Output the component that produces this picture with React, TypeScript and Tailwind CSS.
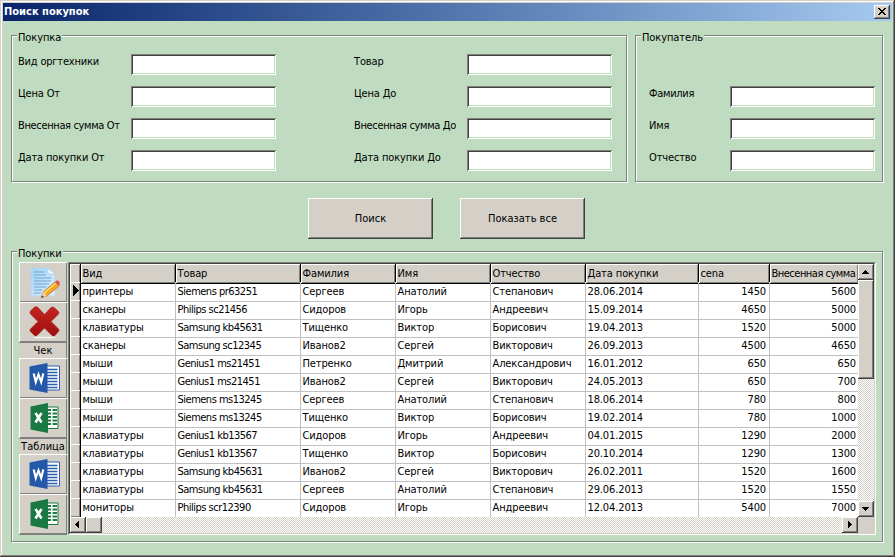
import React from "react";

const raised =
  "bg-[#d4d0c8] shadow-[inset_-1px_-1px_0_#404040,inset_1px_1px_0_#fff,inset_-2px_-2px_0_#808080]";
const dither =
  "bg-[repeating-conic-gradient(#fff_0_25%,#d4d0c8_0_50%)] bg-[length:2px_2px]";

function GroupBox({ title, className, children }: { title: string; className: string; children: React.ReactNode }) {
  return (
    <fieldset
      className={`relative border border-[#808080] shadow-[1px_1px_0_#fff,inset_1px_1px_0_#fff] ${className}`}
    >
      <span className="absolute left-[5px] top-[-7px] h-[14px] whitespace-nowrap bg-[#c0dcc0] px-px leading-[18px] tracking-[-0.1px]">
        {title}
      </span>
      {children}
    </fieldset>
  );
}

function Field({ label, labelWidth, tracking = "tracking-[-0.15px]" }: { label: string; labelWidth: string; tracking?: string }) {
  return (
    <label className="flex h-[21px]">
      <span className={`${labelWidth} ${tracking} whitespace-nowrap leading-[15px]`}>{label}</span>
      <input className="h-[21px] w-[145px] bg-white shadow-[inset_1px_1px_0_#808080,inset_-1px_-1px_0_#fff,inset_2px_2px_0_#404040,inset_-2px_-2px_0_#c0dcc0] outline-none" />
    </label>
  );
}

function EditIcon() {
  return (
    <svg width="30" height="34" viewBox="0 0 30 34">
      <defs>
        <linearGradient id="sheet" x1="0" y1="0" x2="1" y2="1">
          <stop offset="0" stopColor="#a4d2f6" />
          <stop offset="1" stopColor="#dcf0fd" />
        </linearGradient>
      </defs>
      <path d="M1 3H18L25 9V31H1Z" fill="url(#sheet)" stroke="#b4d5ee" strokeWidth=".6" />
      <path d="M18 3V9H25Z" fill="#eef8ff" stroke="#9cc4e4" strokeWidth=".6" />
      <path d="M4 7H15M4 10H16M4 13H21M4 16H21M4 19H19M4 22H16M4 25H12M4 28H11" stroke="#6fa4d0" strokeWidth="1" />
      <path d="M11.500 32.500L13 27L25 17L29 21L17 31Z" fill="#f6a823" stroke="#a86408" strokeWidth=".6" />
      <path d="M14 28L26 18" stroke="#ffdc70" strokeWidth="1.500" />
      <path d="M25 17L26.500 15.500Q28 15 29.200 16.500Q30 18 29.700 20L29 21Z" fill="#d55a4d" />
      <path d="M11.500 32.500L13 27L17 31Z" fill="#f4d5a4" />
      <path d="M11.300 32.700L12 30.200L13.800 32Z" fill="#333" />
    </svg>
  );
}

function DeleteIcon() {
  return (
    <svg width="31" height="33" viewBox="0 0 31 33">
      <defs>
        <linearGradient id="cross" x1="0" y1="0" x2="0" y2="1">
          <stop offset="0" stopColor="#c42420" />
          <stop offset="1" stopColor="#9e1010" />
        </linearGradient>
      </defs>
      <path d="M5 31.500H26" stroke="#f4f2ef" strokeWidth="1.500" />
      <path
        d="M7 1Q8 .5 9 1.500L15.500 8.500L22 1.500Q23.500 .5 25 1.500L29 5Q30.500 6.500 29.500 8L22 15.500L29.500 23Q30.500 24.500 29.500 25.500L26 29.500Q24.500 30.500 23 29.500L15.500 22L8 29.500Q6.500 30.500 5.500 29.500L1.500 25.500Q.5 24.500 1.500 23L9 15.500L1.500 8Q.5 6.500 1.500 5L5 1.500Q6 .5 7 1Z"
        fill="url(#cross)"
        stroke="#a31513"
        strokeWidth=".6"
      />
    </svg>
  );
}

function OfficeIcon({ kind }: { kind: "word" | "excel" }) {
  const word = kind === "word";
  return word ? (
    <svg width="32" height="32" viewBox="0 0 32 32">
      <path d="M17 4H30.500V28H17Z" fill="#fff" stroke="#2b5fb0" strokeWidth="1" />
      <path d="M18 7.500H28.500M18 10.500H28.500M18 13.500H28.500M18 16.500H28.500M18 19.500H28.500M18 22.500H28.500M18 25.500H28.500" stroke="#2b5fb0" strokeWidth="1.300" />
      <path d="M.5 4.500L18.500 1V31L.5 27.500Z" fill="#2458a8" />
      <path d="M4.700 11.500L6.800 20L9.500 12.500L12.200 20L14.300 11.500" fill="none" stroke="#fff" strokeWidth="2.200" />
    </svg>
  ) : (
    <svg width="32" height="32" viewBox="0 0 32 32">
      <path d="M18 5H29V26.500H18Z" fill="#fff" stroke="#1d7b45" strokeWidth="1" />
      <path d="M19 8H22M23.500 8H28M19 11.500H22M23.500 11.500H28M19 15H22M23.500 15H28M19 18.500H22M23.500 18.500H28M19 22H22M23.500 22H28" stroke="#1d7b45" strokeWidth="2.100" />
      <path d="M1.500 4.500L19 1V31L1.500 27.500Z" fill="#1a7842" />
      <path d="M6.500 11L12.500 20.500M12.500 11L6.500 20.500" fill="none" stroke="#fff" strokeWidth="2.600" />
    </svg>
  );
}

function ToolButton({ children, label }: { children: React.ReactNode; label: string }) {
  return (
    <button
      aria-label={label}
      className="flex h-[40px] w-[48px] items-center justify-center bg-[#d4d0c8] pl-[3px] shadow-[inset_1px_1px_0_#fff,inset_-1px_-1px_0_#808080]"
    >
      {children}
    </button>
  );
}

function ToolLabel({ children }: { children: React.ReactNode }) {
  return (
    <div className="h-[16px] w-[48px] bg-[#d4d0c8] text-center leading-[17px] shadow-[inset_0_1px_0_#808080,inset_-1px_0_0_#808080]">
      {children}
    </div>
  );
}

function ScrollButton({ d, className = "" }: { d: string; className?: string }) {
  return (
    <button className={`h-[16px] w-[16px] shrink-0 ${raised} ${className}`}>
      <svg width="16" height="16" viewBox="0 0 16 16" shapeRendering="crispEdges">
        <path d={d} fill="#000" />
      </svg>
    </button>
  );
}

const columns = "grid grid-cols-[11px_95px_125px_95px_95px_95px_113px_71px_88px]";
const headers = ["Вид", "Товар", "Фамилия", "Имя", "Отчество", "Дата покупки", "cena", "Внесенная сумма"];
const rows = [
  ["принтеры", "Siemens pr63251", "Сергеев", "Анатолий", "Степанович", "28.06.2014", "1450", "5600"],
  ["сканеры", "Philips sc21456", "Сидоров", "Игорь", "Андреевич", "15.09.2014", "4650", "5000"],
  ["клавиатуры", "Samsung kb45631", "Тищенко", "Виктор", "Борисович", "19.04.2013", "1520", "5000"],
  ["сканеры", "Samsung sc12345", "Иванов2", "Сергей", "Викторович", "26.09.2013", "4500", "4650"],
  ["мыши", "Genius1 ms21451", "Петренко", "Дмитрий", "Александрович", "16.01.2012", "650", "650"],
  ["мыши", "Genius1 ms21451", "Иванов2", "Сергей", "Викторович", "24.05.2013", "650", "700"],
  ["мыши", "Siemens ms13245", "Сергеев", "Анатолий", "Степанович", "18.06.2014", "780", "800"],
  ["мыши", "Siemens ms13245", "Тищенко", "Виктор", "Борисович", "19.02.2014", "780", "1000"],
  ["клавиатуры", "Genius1 kb13567", "Сидоров", "Игорь", "Андреевич", "04.01.2015", "1290", "2000"],
  ["клавиатуры", "Genius1 kb13567", "Тищенко", "Виктор", "Борисович", "20.10.2014", "1290", "1300"],
  ["клавиатуры", "Samsung kb45631", "Иванов2", "Сергей", "Викторович", "26.02.2011", "1520", "1600"],
  ["клавиатуры", "Samsung kb45631", "Сергеев", "Анатолий", "Степанович", "29.06.2013", "1520", "1550"],
  ["мониторы", "Philips scr12390", "Сидоров", "Игорь", "Андреевич", "12.04.2013", "5400", "7000"],
];

const fixedCell = "border-b border-r border-black bg-[#d4d0c8] shadow-[inset_1px_1px_0_#fff,inset_-1px_-1px_0_#808080]";

function DataGrid() {
  return (
    <div className="ml-px h-[273px] w-[808px] border border-b-white border-l-[#808080] border-r-white border-t-[#808080]">
      <div className="flex h-[271px] flex-col border border-b-[#d4d0c8] border-l-[#404040] border-r-[#d4d0c8] border-t-[#404040] bg-white">
        <div className="flex h-[253px]">
          <div className="w-[788px] overflow-hidden">
            <div className={`${columns} h-[18px]`}>
              <div className={fixedCell} />
              {headers.map((h, i) => (
                <div
                  key={h}
                  className={`whitespace-nowrap pl-[1.5px] leading-[19px] ${fixedCell} ${
                    i === 7 ? "border-r-0 tracking-[-0.5px]" : "tracking-[-0.1px]"
                  }`}
                >
                  {h}
                </div>
              ))}
            </div>
            {rows.map((r, ri) => (
              <div key={ri} className={`${columns} h-[18px]`}>
                <div className={fixedCell}>
                  {ri === 0 && (
                    <svg width="10" height="17" viewBox="0 0 10 17" shapeRendering="crispEdges">
                      <path d="M3 3L9 8.500L3 14Z" fill="#000" />
                    </svg>
                  )}
                </div>
                {r.map((c, ci) => (
                  <div
                    key={ci}
                    className={`whitespace-nowrap border-b border-[#c0c0c0] leading-[19px] ${
                      ci > 5 ? "text-right" : "pl-[1.5px]"
                    } ${ci === 7 ? "pr-[2px]" : "border-r pr-[3px]"} ${
                      ci === 1 ? "tracking-[-0.5px]" : "tracking-[-0.12px]"
                    }`}
                  >
                    {c}
                  </div>
                ))}
              </div>
            ))}
          </div>
          <div className={`flex w-[16px] flex-col ${dither}`}>
            <ScrollButton d="M7 6h1v1h1v1h1v1h1v1H4v-1h1v-1h1v-1h1z" />
            <div className={`h-[99px] ${raised}`} />
            <ScrollButton className="mt-auto" d="M4 6h7v1h-1v1h-1v1h-1v1h-1v-1h-1v-1h-1v-1h-1z" />
          </div>
        </div>
        <div className="flex h-[16px]">
          <div className={`flex w-[788px] ${dither}`}>
            <ScrollButton d="M5 7h1v-1h1v-1h1v-1h1v7h-1v-1h-1v-1h-1v-1h-1z" />
            <div className={`h-[16px] w-[16px] ${raised}`} />
            <ScrollButton className="ml-auto" d="M6 4h1v1h1v1h1v1h1v1h-1v1h-1v1h-1v1h-1z" />
          </div>
          <div className="w-[16px] bg-[#d4d0c8]" />
        </div>
      </div>
    </div>
  );
}

export default function App() {
  return (
    <div className="h-[557px] w-[895px] overflow-hidden bg-[#c0dcc0] font-['DejaVu_Sans_Condensed','DejaVu_Sans',sans-serif] text-[11px] text-black shadow-[inset_-1px_-1px_0_#404040,inset_1px_1px_0_#d4d0c8,inset_-2px_-2px_0_#808080,inset_2px_2px_0_#fff,inset_3px_3px_0_#d4d0c8]">
      <div className="mx-[3px] flex h-[21px] items-start pt-[3px]">
        <div className="flex h-[18px] w-full items-center justify-between bg-linear-to-r from-[#0a246a] to-[#a6caf0] pl-px pr-[2px]">
          <span className="text-[11px] font-bold leading-[18px] text-white">Поиск покупок</span>
          <button className={`h-[14px] w-[16px] ${raised}`}>
            <svg width="16" height="14" viewBox="0 0 16 14" shapeRendering="crispEdges">
              <path d="M4 3h2v1h1v1h2v-1h1v-1h2v1h-1v1h-1v1h-1v1h1v1h1v1h1v1h-2v-1h-1v-1h-2v1h-1v1h-2v-1h1v-1h1v-1h1v-1h-1v-1h-1v-1h-1z" fill="#000" />
            </svg>
          </button>
        </div>
      </div>

      <div className="ml-[11px] flex gap-[8px] pt-[14px]">
        <GroupBox title="Покупка" className="h-[147px] w-[616px]">
          <div className="flex gap-[78px] pl-[6px] pt-[18px]">
            <div className="flex flex-col gap-[11px]">
              <Field label="Вид оргтехники" labelWidth="w-[113px]" tracking="tracking-[-0.2px]" />
              <Field label="Цена От" labelWidth="w-[113px]" />
              <Field label="Внесенная сумма От" labelWidth="w-[113px]" tracking="tracking-[-0.35px]" />
              <Field label="Дата покупки От" labelWidth="w-[113px]" />
            </div>
            <div className="flex flex-col gap-[11px]">
              <Field label="Товар" labelWidth="w-[113px]" />
              <Field label="Цена До" labelWidth="w-[113px]" />
              <Field label="Внесенная сумма До" labelWidth="w-[113px]" tracking="tracking-[-0.35px]" />
              <Field label="Дата покупки До" labelWidth="w-[113px]" />
            </div>
          </div>
        </GroupBox>
        <GroupBox title="Покупатель" className="h-[147px] w-[248px]">
          <div className="flex flex-col gap-[11px] pl-[13px] pt-[50px]">
            <Field label="Фамилия" labelWidth="w-[81px]" tracking="tracking-[-0.3px]" />
            <Field label="Имя" labelWidth="w-[81px]" />
            <Field label="Отчество" labelWidth="w-[81px]" />
          </div>
        </GroupBox>
      </div>

      <div className="flex gap-[27px] pl-[308px] pt-[16px]">
        <button className={`h-[41px] w-[125px] pt-[2px] ${raised}`}>Поиск</button>
        <button className={`h-[41px] w-[125px] pt-[2px] ${raised}`}>Показать все</button>
      </div>

      <div className="ml-[11px] pt-[12px]">
        <GroupBox title="Покупки" className="h-[291px] w-[872px]">
          <div className="flex pl-[7px] pt-[10px]">
            <div className="h-[273px] w-[48px] bg-[#808080]">
              <ToolButton label="Редактировать"><EditIcon /></ToolButton>
              <ToolButton label="Удалить"><DeleteIcon /></ToolButton>
              <ToolLabel>Чек</ToolLabel>
              <ToolButton label="Чек Word"><OfficeIcon kind="word" /></ToolButton>
              <ToolButton label="Чек Excel"><OfficeIcon kind="excel" /></ToolButton>
              <ToolLabel>Таблица</ToolLabel>
              <ToolButton label="Таблица Word"><OfficeIcon kind="word" /></ToolButton>
              <ToolButton label="Таблица Excel"><OfficeIcon kind="excel" /></ToolButton>
            </div>
            <DataGrid />
          </div>
        </GroupBox>
      </div>
    </div>
  );
}
